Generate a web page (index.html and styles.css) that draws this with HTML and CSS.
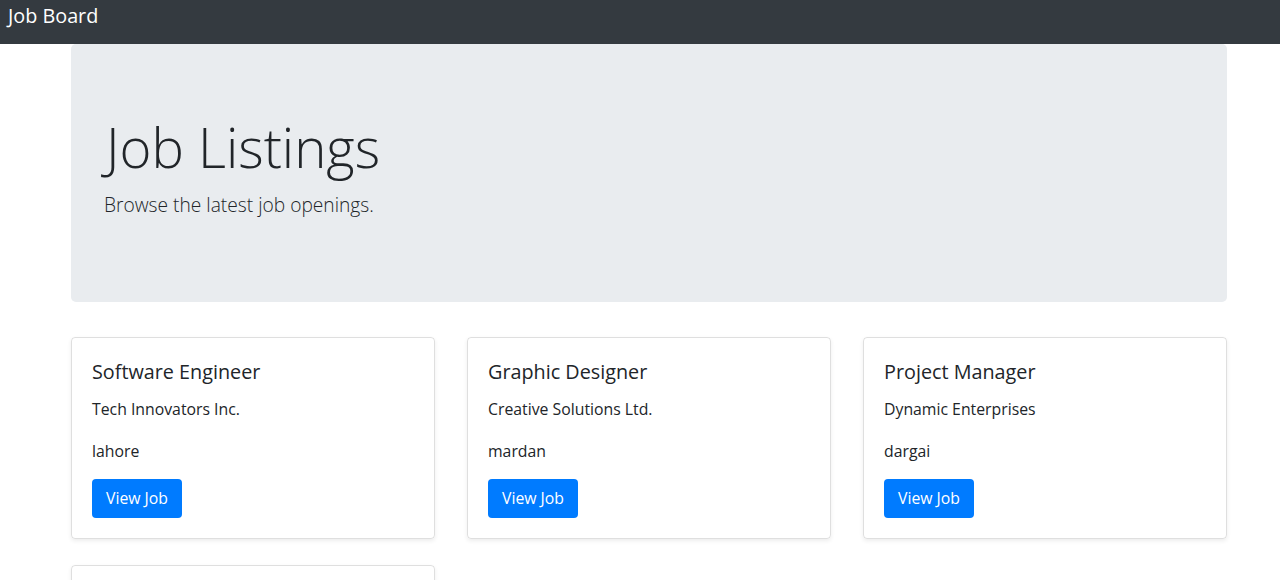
FILE: index.html
```html
<!DOCTYPE html>
<html lang="en">
<head>
<meta charset="utf-8">
<title>Job Board</title>
<link rel="stylesheet" href="styles.css">
</head>
<body>
<nav class="navbar">
  <a class="brand" href="#">Job Board</a>
</nav>
<main class="container">
  <section class="jumbotron">
    <h1 class="display">Job Listings</h1>
    <p class="lead">Browse the latest job openings.</p>
  </section>
  <div class="grid">
    <div class="card">
      <h5 class="card-title">Software Engineer</h5>
      <p class="card-text">Tech Innovators Inc.</p>
      <p class="card-text last">lahore</p>
      <a class="btn" href="#">View Job</a>
    </div>
    <div class="card">
      <h5 class="card-title">Graphic Designer</h5>
      <p class="card-text">Creative Solutions Ltd.</p>
      <p class="card-text last">mardan</p>
      <a class="btn" href="#">View Job</a>
    </div>
    <div class="card">
      <h5 class="card-title">Project Manager</h5>
      <p class="card-text">Dynamic Enterprises</p>
      <p class="card-text last">dargai</p>
      <a class="btn" href="#">View Job</a>
    </div>
    <div class="card"></div>
  </div>
</main>
</body>
</html>
```
FILE: styles.css
```css
* { box-sizing: border-box; }
html, body { margin: 0; padding: 0; }
body {
  font-family: "Open Sans", "Noto Sans", sans-serif;
  font-size: 15.8px;
  line-height: 25px;
  color: #212529;
  background: #fff;
  overflow: hidden;
}
.navbar {
  background: #343a40;
  height: 44px;
  padding: 0 8px;
}
.brand {
  display: inline-block;
  color: #fff;
  text-decoration: none;
  font-size: 19.8px;
  line-height: 32px;
}
.container {
  width: 1156px;
  margin-left: 71px;
}
.jumbotron {
  background: #e9ecef;
  border-radius: 5px;
  padding: 69px 33px 66px;
  height: 258px;
  margin-bottom: 35px;
}
.display {
  margin: 0 0 8px 2px;
  font-size: 54.5px;
  font-weight: 300;
  line-height: 68px;
}
.lead {
  margin: 0;
  font-size: 19.2px;
  font-weight: 300;
  line-height: 31px;
}
.grid {
  display: grid;
  grid-template-columns: repeat(3, 1fr);
  column-gap: 32px;
  row-gap: 26px;
}
.card {
  border: 1px solid rgba(0,0,0,.125);
  border-radius: 4px;
  box-shadow: 0 2px 4px rgba(0,0,0,.075);
  padding: 21px 20px 20px;
  height: 202px;
}
.card-title {
  margin: 0 0 13px;
  font-size: 19.8px;
  font-weight: 400;
  line-height: 25px;
}
.card-text {
  margin: 0 0 17px;
}
.card-text.last {
  margin-bottom: 15px;
}
.btn {
  display: inline-block;
  background: #007bff;
  color: #fff;
  text-decoration: none;
  border-radius: 4px;
  padding: 6px 14px;
  height: 39px;
  line-height: 27px;
}
```
